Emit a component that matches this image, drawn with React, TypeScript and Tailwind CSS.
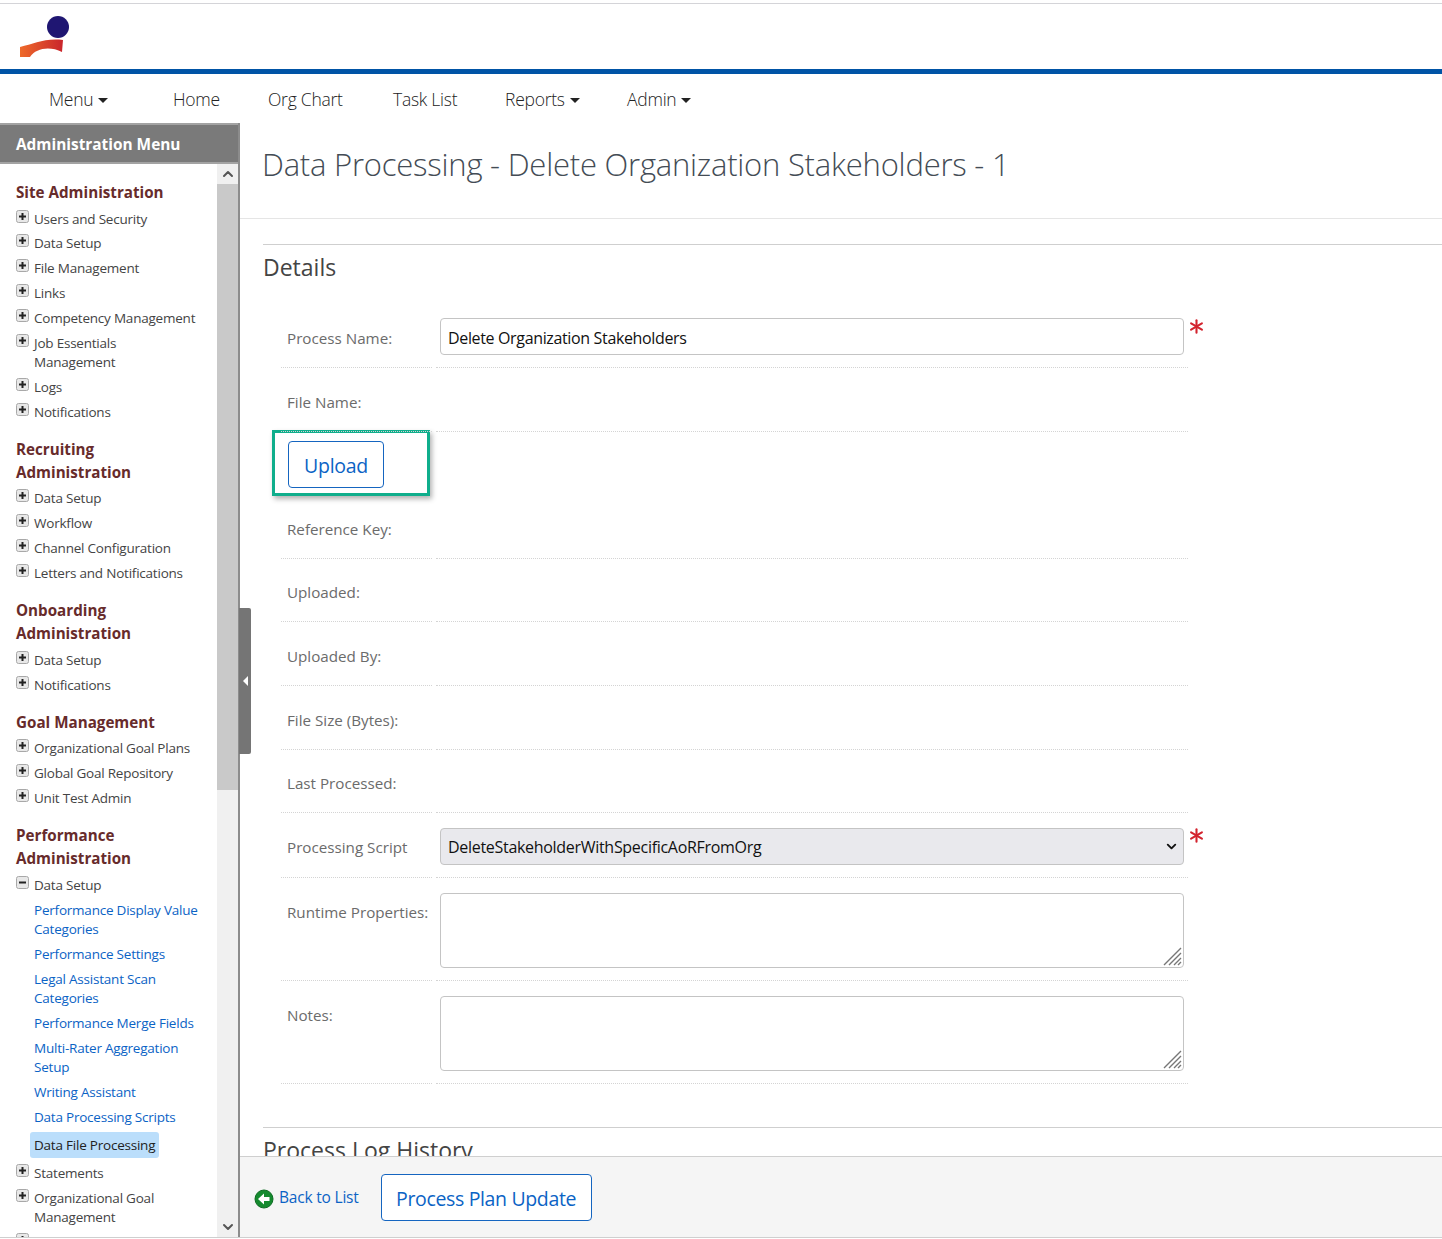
import { Asterisk, ChevronDown, ChevronUp } from "lucide-react";

type Item = { label: string; open?: boolean; link?: boolean; active?: boolean; tight?: boolean };
type Section = { title: string[]; titleGap: string; items: Item[] };

const sections: Section[] = [
  {
    title: ["Site Administration"],
    titleGap: "mb-[6px]",
    items: [
      { label: "Users and Security", tight: true },
      { label: "Data Setup" },
      { label: "File Management" },
      { label: "Links" },
      { label: "Competency Management" },
      { label: "Job Essentials Management" },
      { label: "Logs" },
      { label: "Notifications" },
    ],
  },
  {
    title: ["Recruiting", "Administration"],
    titleGap: "mb-[5px]",
    items: [
      { label: "Data Setup" },
      { label: "Workflow" },
      { label: "Channel Configuration" },
      { label: "Letters and Notifications" },
    ],
  },
  {
    title: ["Onboarding", "Administration"],
    titleGap: "mb-[6px]",
    items: [{ label: "Data Setup" }, { label: "Notifications" }],
  },
  {
    title: ["Goal Management"],
    titleGap: "mb-[5px]",
    items: [
      { label: "Organizational Goal Plans" },
      { label: "Global Goal Repository" },
      { label: "Unit Test Admin" },
    ],
  },
  {
    title: ["Performance", "Administration"],
    titleGap: "mb-[6px]",
    items: [
      { label: "Data Setup", open: true },
      { label: "Performance Display Value Categories", link: true },
      { label: "Performance Settings", link: true },
      { label: "Legal Assistant Scan Categories", link: true },
      { label: "Performance Merge Fields", link: true },
      { label: "Multi-Rater Aggregation Setup", link: true },
      { label: "Writing Assistant", link: true },
      { label: "Data Processing Scripts", link: true },
      { label: "Data File Processing", link: true, active: true },
      { label: "Statements" },
      { label: "Organizational Goal Management" },
      { label: "" },
    ],
  },
];

function TreeIcon({ open }: { open?: boolean }) {
  return (
    <svg width="13" height="13" viewBox="0 0 13 13" className="absolute left-[16px] top-[0px]">
      <rect x="0.5" y="0.5" width="12" height="12" rx="2" fill="#e8e8e8" stroke="#a8a8a8" />
      <rect x="3" y="5.5" width="7" height="2" fill="#222" />
      {!open && <rect x="5.5" y="3" width="2" height="7" fill="#222" />}
    </svg>
  );
}

function MenuRow({ item }: { item: Item }) {
  if (item.active) {
    return (
      <div className="pl-[30px] -mt-[1px] mb-[6px]">
        <span className="inline-block bg-[#bbdefb] rounded-[3px] px-[4px] h-[26px] leading-[26px] text-[#222]">{item.label}</span>
      </div>
    );
  }
  return (
    <div className={`relative pl-[34px] pr-[18px] min-h-[19px] ${item.tight ? "mb-[5px]" : "mb-[6px]"} ${item.link ? "text-[#0b63c5]" : "text-[#444]"}`}>
      {!item.link && <TreeIcon open={item.open} />}
      {item.label}
    </div>
  );
}

function Sidebar() {
  return (
    <aside className="relative w-[240px] shrink-0 border-r-2 border-[#8c8c8c] flex flex-col">
      <div className="h-[41px] shrink-0 bg-[#7a7a7a] border-y-2 border-[#a3a3a3] pl-[16px] text-white font-bold text-[15.4px] leading-[39px]">
        Administration Menu
      </div>
      <div className="flex flex-1 min-h-0">
        <div className="w-[217px] overflow-hidden pt-[17px] text-[13.5px] tracking-[-0.22px] leading-[19px]">
          {sections.map((s) => (
            <div key={s.title[0]} className="mb-[16px]">
              <div className={`pl-[16px] font-bold text-[15.2px] tracking-normal leading-[23px] text-[#672b2b] ${s.titleGap}`}>
                {s.title.map((t) => (
                  <div key={t}>{t}</div>
                ))}
              </div>
              {s.items.map((item, i) => (
                <MenuRow key={i} item={item} />
              ))}
            </div>
          ))}
        </div>
        <div className="w-[21px] bg-[#f0f0f0] flex flex-col">
          <div className="h-[20px] flex items-center justify-center">
            <ChevronUp size={16} strokeWidth={3} className="text-[#555]" />
          </div>
          <div className="h-[606px] bg-[#c9c9c9]" />
          <div className="flex-1" />
          <div className="h-[20px] flex items-center justify-center">
            <ChevronDown size={16} strokeWidth={3} className="text-[#555]" />
          </div>
        </div>
      </div>
      <div className="absolute left-[239px] top-[485px] w-[12px] h-[146px] bg-[#757575] rounded-r-[2px] flex items-center justify-center">
        <div className="w-0 h-0 border-y-[5px] border-y-transparent border-r-[5px] border-r-white" />
      </div>
    </aside>
  );
}

function Row({ label, height, children, top }: { label: string; height: number; children?: React.ReactNode; top?: boolean }) {
  return (
    <div className="flex" style={{ height }}>
      <div className={`w-[151px] border-b border-dotted border-[#d4d4d4] pl-[6px] text-[#6b6b6b] ${top ? "pt-[23px]" : "flex items-center pt-[5px]"}`}>
        {label}
      </div>
      <div className="w-[4px]" />
      <div className="w-[752px] border-b border-dotted border-[#d4d4d4] px-[4px] flex items-start pt-[15px]">{children}</div>
    </div>
  );
}

function Star() {
  return <Asterisk size={25} strokeWidth={2} className="absolute left-[903px] top-[10px] text-[#d3232e]" />;
}

function Resizer() {
  return (
    <svg width="19" height="19" viewBox="0 0 19 19" className="absolute right-[1px] bottom-[1px]" stroke="#777" strokeWidth="1.4">
      <path d="M1 18 18 1M6 18 18 6M11 18 18 11M15 18 18 15" />
    </svg>
  );
}

function TextBox() {
  return (
    <div className="relative w-[744px] h-[75px] rounded-[4px] border border-[#c4c4c4] bg-white">
      <Resizer />
    </div>
  );
}

function Content() {
  return (
    <main className="flex-1 min-w-0 flex flex-col">
      <div className="flex-1 min-h-0 overflow-hidden">
        <div className="h-[96px] border-b border-[#e5e5e5] pl-[22px] pt-[18px] text-[31px] font-light tracking-[-0.22px] leading-[47px] text-[#444c55]">
          Data Processing - Delete Organization Stakeholders - 1
        </div>
        <div className="pl-[23px] pt-[25px]">
          <div className="border-t border-[#cfcfcf] pt-[6px] pb-[20px] text-[23px] leading-[33px] text-[#444]">Details</div>
          <div className="pl-[18px] text-[15.2px] text-[#111]">
            <div className="relative">
              <Row label="Process Name:" height={64}>
                <div className="w-[744px] h-[37px] -mt-[1px] rounded-[4px] border border-[#c4c4c4] px-[7px] text-[16px] tracking-[-0.35px] leading-[37px] pt-[1px]">
                  Delete Organization Stakeholders
                </div>
                <Star />
              </Row>
            </div>
            <Row label="File Name:" height={64} />
            <div className="h-[64px] -ml-[9px] -mt-[2px] mb-[2px]">
              <div className="w-[158px] h-[66px] border-[3px] border-[#0fae8c] shadow-[2px_3px_5px_rgba(0,0,0,0.3)] pl-[13px] pt-[8px]">
                <button className="w-[96px] h-[47px] pt-[2px] rounded-[4px] border border-[#1565c0] text-[19.5px] tracking-[-0.3px] text-[#0b63c5] bg-white">Upload</button>
              </div>
            </div>
            <Row label="Reference Key:" height={63} />
            <Row label="Uploaded:" height={63} />
            <Row label="Uploaded By:" height={64} />
            <Row label="File Size (Bytes):" height={64} />
            <Row label="Last Processed:" height={63} />
            <div className="relative">
              <Row label="Processing Script" height={65}>
                <div className="relative w-[744px] h-[37px] rounded-[4px] border border-[#c4c4c4] bg-[#e9e9ed] px-[7px] text-[16px] tracking-[-0.3px] leading-[37px]">
                  DeleteStakeholderWithSpecificAoRFromOrg
                  <ChevronDown size={15} strokeWidth={3} className="absolute right-[4px] top-[10px] text-[#111]" />
                </div>
                <Star />
              </Row>
            </div>
            <Row label="Runtime Properties:" height={103} top>
              <TextBox />
            </Row>
            <Row label="Notes:" height={103} top>
              <TextBox />
            </Row>
          </div>
          <div className="mt-[43px] border-t border-[#cfcfcf] pt-[6px] text-[23px] leading-[33px] text-[#444]">Process Log History</div>
        </div>
      </div>
      <div className="h-[81px] pt-[1px] shrink-0 bg-[#f5f5f5] border-t border-[#cfcfcf] flex items-center pl-[14px]">
        <svg width="20" height="20" viewBox="0 0 20 20" className="mr-[5px] mt-[3px]">
          <circle cx="10" cy="10" r="9" fill="#148a2e" stroke="#0d6b22" />
          <path d="M4 10 10 4.5V8H15.5V12H10V15.5Z" fill="#fff" />
        </svg>
        <span className="text-[15.5px] tracking-[-0.2px] text-[#0b63c5] mr-[22px]">Back to List</span>
        <button className="w-[211px] h-[47px] pt-[2px] rounded-[4px] border border-[#1565c0] text-[19.5px] tracking-[-0.35px] text-[#0b63c5] bg-white">Process Plan Update</button>
      </div>
    </main>
  );
}

export default function App() {
  const nav = [
    { label: "Menu", caret: true, x: "w-[124px]" },
    { label: "Home", x: "w-[95px]" },
    { label: "Org Chart", x: "w-[125px]" },
    { label: "Task List", x: "w-[112px]" },
    { label: "Reports", caret: true, x: "w-[122px]" },
    { label: "Admin", caret: true, x: "w-[100px]" },
  ];
  return (
    <div className="w-[1442px] h-[1238px] overflow-hidden flex flex-col bg-white font-['Open_Sans','Noto_Sans',sans-serif] border-b border-[#cfcfcf]">
      <header className="h-[71px] shrink-0 mt-[3px] border-t border-[#d4d4d8] border-b-[5px] border-b-[#0054a6] pl-[20px]">
        <svg width="50" height="48" viewBox="0 0 50 48" className="mt-[10px]">
          <defs>
            <linearGradient id="swoosh" x1="0" x2="1">
              <stop offset="0" stopColor="#ee6a2a" />
              <stop offset="1" stopColor="#c9252c" />
            </linearGradient>
          </defs>
          <circle cx="38" cy="13" r="11" fill="#1f1672" />
          <path d="M0 43V33C14 30 24 24 43 26L42 38C30 32 16 34 10 43Z" fill="url(#swoosh)" />
        </svg>
      </header>
      <nav className="h-[49px] pt-[1px] shrink-0 flex items-center pl-[49px] text-[17.5px] font-light tracking-[-0.25px] text-[#222]">
        {nav.map((n) => (
          <div key={n.label} className={`${n.x} flex items-center`}>
            {n.label}
            {n.caret && <span className="ml-[5px] mt-[2px] w-0 h-0 border-x-[5px] border-x-transparent border-t-[5px] border-t-[#222]" />}
          </div>
        ))}
      </nav>
      <div className="flex flex-1 min-h-0">
        <Sidebar />
        <Content />
      </div>
    </div>
  );
}
